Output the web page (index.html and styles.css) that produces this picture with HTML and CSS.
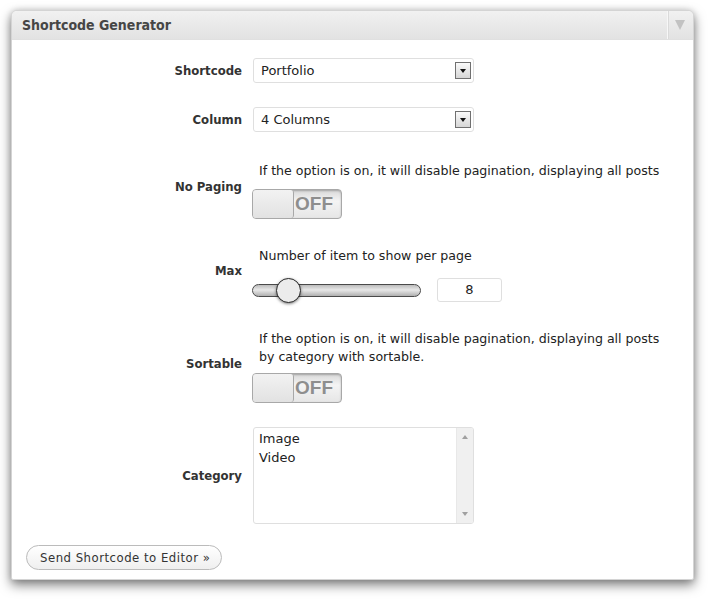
FILE: index.html
```html
<!DOCTYPE html>
<html>
<head>
<meta charset="utf-8">
<link rel="stylesheet" href="styles.css">
</head>
<body>
<div class="panel">
  <div class="panel-head">
    <h3 class="panel-title">Shortcode Generator</h3>
    <div class="panel-toggle"><span class="tri"></span></div>
  </div>
  <div class="panel-body">
    <div class="form">
      <div class="label">Shortcode</div>
      <div class="control">
        <div class="select"><span class="select-text">Portfolio</span><span class="select-btn"><span class="mini-tri"></span></span></div>
      </div>

      <div class="label">Column</div>
      <div class="control">
        <div class="select"><span class="select-text">4 Columns</span><span class="select-btn"><span class="mini-tri"></span></span></div>
      </div>

      <div class="label label-paging">No Paging</div>
      <div class="control control-desc">
        <div class="desc">If the option is on, it will disable pagination, displaying all posts</div>
        <div class="toggle"><span class="toggle-knob"></span><span class="toggle-off">OFF</span></div>
      </div>

      <div class="label label-max">Max</div>
      <div class="control control-desc2">
        <div class="desc">Number of item to show per page</div>
        <div class="slider-row">
          <div class="slider"><span class="slider-thumb"></span></div>
          <div class="num">8</div>
        </div>
      </div>

      <div class="label label-sort">Sortable</div>
      <div class="control control-desc2">
        <div class="desc">If the option is on, it will disable pagination, displaying all posts<br>by category with sortable.</div>
        <div class="toggle toggle-tight"><span class="toggle-knob"></span><span class="toggle-off">OFF</span></div>
      </div>

      <div class="label">Category</div>
      <div class="control">
        <div class="listbox">
          <div class="list-items">
            <div class="list-item">Image</div>
            <div class="list-item">Video</div>
          </div>
          <div class="scrollbar"><span class="sb-up"></span><span class="sb-down"></span></div>
        </div>
      </div>
    </div>
    <div class="actions">
      <span class="button">Send Shortcode to Editor &raquo;</span>
    </div>
  </div>
</div>
</body>
</html>
```
FILE: styles.css
```css
html, body {
  margin: 0;
  padding: 0;
  background: #ffffff;
}
html { height: 100%; }
body {
  box-sizing: border-box;
  min-height: 599px;
  padding: 10px 18px 0 11px;
  font-family: "DejaVu Sans", Verdana, sans-serif;
  font-size: 13px;
  color: #333;
}
.panel {
  width: 681px;
  height: 568px;
  border: 1px solid #d4d4d4;
  border-radius: 6px 6px 2px 2px;
  background: #fff;
  box-shadow: 0 5px 12px rgba(0,0,0,0.5), 0 0 6px rgba(0,0,0,0.15);
  display: flex;
  flex-direction: column;
  overflow: hidden;
}
.panel-head {
  height: 28px;
  display: flex;
  align-items: stretch;
  background: linear-gradient(#f1f1f1, #e2e2e2);
  border-bottom: 1px solid #e0e0e0;
}
.panel-title {
  flex: 1;
  margin: 0;
  padding-left: 10px;
  font-family: "DejaVu Sans Condensed", Tahoma, sans-serif;
  font-weight: bold;
  font-size: 14px;
  line-height: 29px;
  color: #464646;
}
.panel-toggle {
  width: 25px;
  border-left: 1px solid #f7f7f7;
  box-shadow: inset 1px 0 0 #dadada;
  display: flex;
  align-items: center;
  justify-content: center;
}
.tri {
  width: 0;
  height: 0;
  border-left: 5px solid transparent;
  border-right: 5px solid transparent;
  border-top: 10px solid #c2c2c2;
  margin-left: -2px;
}
.panel-body {
  flex: 1;
  display: flex;
  flex-direction: column;
  padding: 18px 0 0 14px;
}
.form {
  display: grid;
  grid-template-columns: 216px 1fr;
  column-gap: 11px;
  row-gap: 24px;
  align-items: center;
}
.label {
  text-align: right;
  font-family: "DejaVu Sans Condensed", Tahoma, sans-serif;
  font-weight: bold;
  font-size: 13px;
  color: #333;
}
.label-paging { margin-top: -2px; }
.label-max { margin-top: -4px; }
.label-sort { margin-top: -2px; }
.control { display: flex; flex-direction: column; align-items: flex-start; }
.control-desc { padding-top: 6px; }
.control-desc2 { padding-top: 4px; }
.desc {
  font-size: 12.6px;
  line-height: 18px;
  color: #222;
  padding-left: 6px;
  font-family: "DejaVu Sans", Verdana, sans-serif;
}
.select {
  box-sizing: border-box;
  width: 221px;
  height: 25px;
  border: 1px solid #dfdfdf;
  border-radius: 3px;
  display: flex;
  align-items: center;
  justify-content: space-between;
  padding: 0 2px 0 7px;
  background: #fff;
}
.select-text { color: #222; }
.select-btn {
  box-sizing: border-box;
  width: 16px;
  height: 17px;
  border: 1px solid #707070;
  background: linear-gradient(#fafafa, #d6d6d6);
  display: flex;
  align-items: center;
  justify-content: center;
}
.mini-tri {
  width: 0; height: 0;
  border-left: 3px solid transparent;
  border-right: 3px solid transparent;
  border-top: 4px solid #111;
  margin-top: 1px;
}
.toggle {
  box-sizing: border-box;
  margin-top: 9px;
  margin-left: -1px;
  width: 90px;
  height: 30px;
  border: 1px solid #a8a8a8;
  border-radius: 4px;
  display: flex;
  overflow: hidden;
  background: linear-gradient(#d8d8d8, #f4f4f4 40%, #e6e6e6);
  box-shadow: inset 0 1px 2px rgba(0,0,0,0.25);
}
.toggle-tight { margin-top: 7px; }
.toggle-knob {
  width: 41px;
  height: 100%;
  box-sizing: border-box;
  border-right: 1px solid #a8a8a8;
  border-radius: 0 3px 3px 0;
  background: linear-gradient(#f2f2f2, #e2e2e2);
}
.toggle-off {
  flex: 1;
  font-family: "Liberation Sans", Arial, sans-serif;
  font-weight: bold;
  font-size: 19px;
  line-height: 28px;
  color: #8e8e8e;
  padding-left: 1px;
}
.slider-row {
  display: flex;
  align-items: center;
  margin-top: 13px;
  gap: 16px;
  margin-left: -1px;
}
.slider {
  position: relative;
  box-sizing: border-box;
  width: 169px;
  height: 13px;
  border: 1px solid #4a4a4a;
  border-radius: 7px;
  background: linear-gradient(#bcbcbc, #e8e8e8 45%, #b0b0b0);
}
.slider-thumb {
  position: absolute;
  left: 23px;
  top: -7px;
  box-sizing: border-box;
  width: 25px;
  height: 25px;
  border: 1.5px solid #2a2a2a;
  border-radius: 50%;
  background: #ececec;
  box-shadow: 0 1px 3px rgba(0,0,0,0.5);
}
.num {
  box-sizing: border-box;
  width: 65px;
  height: 24px;
  border: 1px solid #dfdfdf;
  border-radius: 3px;
  text-align: center;
  line-height: 22px;
  color: #222;
}
.listbox {
  box-sizing: border-box;
  width: 221px;
  height: 97px;
  border: 1px solid #dfdfdf;
  border-radius: 3px;
  display: flex;
  overflow: hidden;
}
.list-items {
  flex: 1;
  padding: 1px 5px;
  line-height: 19px;
  color: #222;
}
.scrollbar {
  width: 16px;
  background: #f0f0f0;
  border-left: 1px solid #e8e8e8;
  display: flex;
  flex-direction: column;
  justify-content: space-between;
  align-items: center;
  padding: 7px 0;
}
.sb-up, .sb-down {
  width: 0; height: 0;
  border-left: 3px solid transparent;
  border-right: 3px solid transparent;
}
.sb-up { border-bottom: 4px solid #a0a0a0; }
.sb-down { border-top: 4px solid #a0a0a0; }
.actions {
  margin-top: 21px;
  display: flex;
}
.button {
  box-sizing: border-box;
  height: 25px;
  width: 196px;
  border: 1px solid #bbb;
  border-radius: 13px;
  background: linear-gradient(#ffffff, #efefef);
  font-family: "DejaVu Sans Condensed", Tahoma, sans-serif;
  font-size: 13px;
  letter-spacing: 0.5px;
  line-height: 23px;
  color: #333;
  padding-left: 13px;
}
```
